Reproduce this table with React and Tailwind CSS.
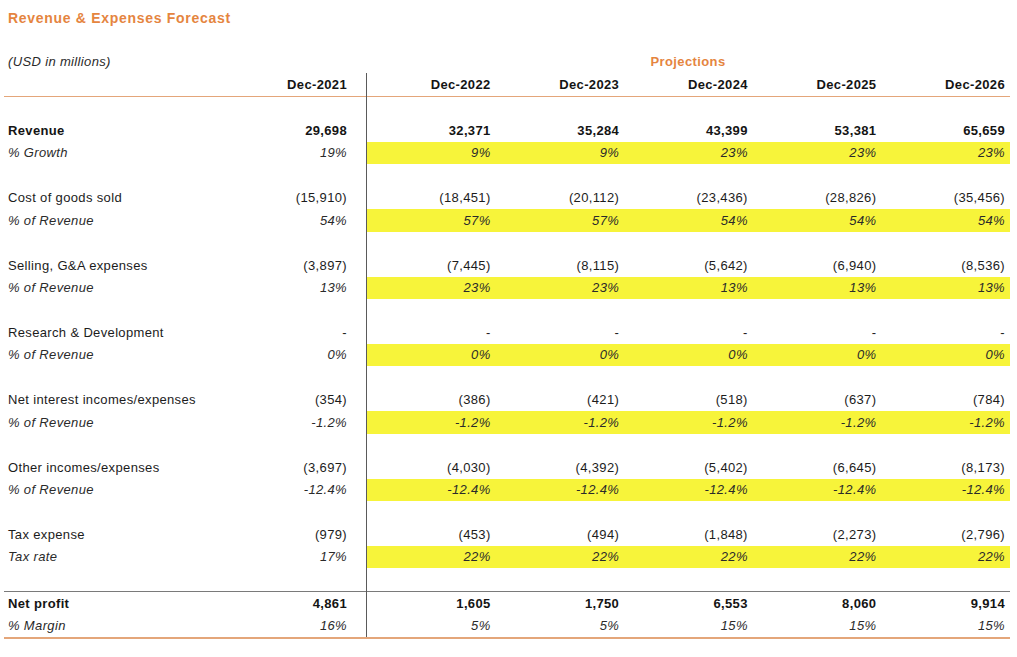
import React from "react";

const groups = [
  {
    label: "Revenue",
    bold: true,
    v: ["29,698", "32,371", "35,284", "43,399", "53,381", "65,659"],
    sub: "% Growth",
    s: ["19%", "9%", "9%", "23%", "23%", "23%"],
  },
  {
    label: "Cost of goods sold",
    v: ["(15,910)", "(18,451)", "(20,112)", "(23,436)", "(28,826)", "(35,456)"],
    sub: "% of Revenue",
    s: ["54%", "57%", "57%", "54%", "54%", "54%"],
  },
  {
    label: "Selling, G&A expenses",
    v: ["(3,897)", "(7,445)", "(8,115)", "(5,642)", "(6,940)", "(8,536)"],
    sub: "% of Revenue",
    s: ["13%", "23%", "23%", "13%", "13%", "13%"],
  },
  {
    label: "Research & Development",
    v: ["-", "-", "-", "-", "-", "-"],
    sub: "% of Revenue",
    s: ["0%", "0%", "0%", "0%", "0%", "0%"],
  },
  {
    label: "Net interest incomes/expenses",
    v: ["(354)", "(386)", "(421)", "(518)", "(637)", "(784)"],
    sub: "% of Revenue",
    s: ["-1.2%", "-1.2%", "-1.2%", "-1.2%", "-1.2%", "-1.2%"],
  },
  {
    label: "Other incomes/expenses",
    v: ["(3,697)", "(4,030)", "(4,392)", "(5,402)", "(6,645)", "(8,173)"],
    sub: "% of Revenue",
    s: ["-12.4%", "-12.4%", "-12.4%", "-12.4%", "-12.4%", "-12.4%"],
  },
  {
    label: "Tax expense",
    v: ["(979)", "(453)", "(494)", "(1,848)", "(2,273)", "(2,796)"],
    sub: "Tax rate",
    s: ["17%", "22%", "22%", "22%", "22%", "22%"],
  },
];

function Row({ label, values, bold, italic, yellow }) {
  const txt = bold ? "font-bold text-[#141414]" : italic ? "italic text-[#2a2a2a]" : "text-[#1c1c1c]";
  return (
    <div className={`flex h-[22.45px] ${txt}`}>
      <div className="w-[362px] flex items-center justify-between pl-[4px] pr-[19px]">
        <span>{label}</span>
        <span>{values ? values[0] : ""}</span>
      </div>
      <div
        className={`flex-1 grid grid-cols-5 border-l-[1.5px] border-[#5a5a5a] ${
          yellow ? "bg-[#f7f43a]" : ""
        }`}
      >
        {[1, 2, 3, 4, 5].map((i) => (
          <div key={i} className="flex items-center justify-end pr-[5px]">
            {values ? values[i] : ""}
          </div>
        ))}
      </div>
    </div>
  );
}

function Line({ color, h }) {
  return (
    <div className="flex">
      <div className={`w-[362px] ${h} ${color}`} />
      <div className={`flex-1 ${h} ${color} border-l-[1.5px] border-[#5a5a5a]`} />
    </div>
  );
}

export default function App() {
  return (
    <div
      className="w-[1017px] h-[657px] bg-white overflow-hidden text-[13px] tracking-[0.35px]"
      style={{ fontFamily: '"Liberation Sans", Arial, sans-serif' }}
    >
      <div className="h-[36px] flex items-center pl-[8px] text-[14px] font-bold tracking-[0.7px] text-[#e5853f]">
        Revenue &amp; Expenses Forecast
      </div>
      <div className="w-[1006px] ml-[4px] mt-[14.75px]">
        <div className="flex h-[22.45px] items-center">
          <div className="w-[362px] pl-[4px] italic text-[#2a2a2a]">(USD in millions)</div>
          <div className="flex-1 flex justify-center font-bold text-[#e5853f] tracking-[0.4px]">Projections</div>
        </div>
        <Row
          bold
          values={["Dec-2021", "Dec-2022", "Dec-2023", "Dec-2024", "Dec-2025", "Dec-2026"]}
        />
        <Line color="bg-[#e4a67a]" h="h-[1.5px]" />
        <Row />
        {groups.map((g, idx) => (
          <React.Fragment key={idx}>
            <Row label={g.label} values={g.v} bold={g.bold} />
            <Row label={g.sub} values={g.s} italic yellow />
            <Row />
          </React.Fragment>
        ))}
        <Line color="bg-[#7a7a7a]" h="h-[1.5px]" />
        <Row label="Net profit" bold values={["4,861", "1,605", "1,750", "6,553", "8,060", "9,914"]} />
        <Row label="% Margin" italic values={["16%", "5%", "5%", "15%", "15%", "15%"]} />
        <div className="h-[1.5px] bg-[#e4a67a]" />
      </div>
    </div>
  );
}
